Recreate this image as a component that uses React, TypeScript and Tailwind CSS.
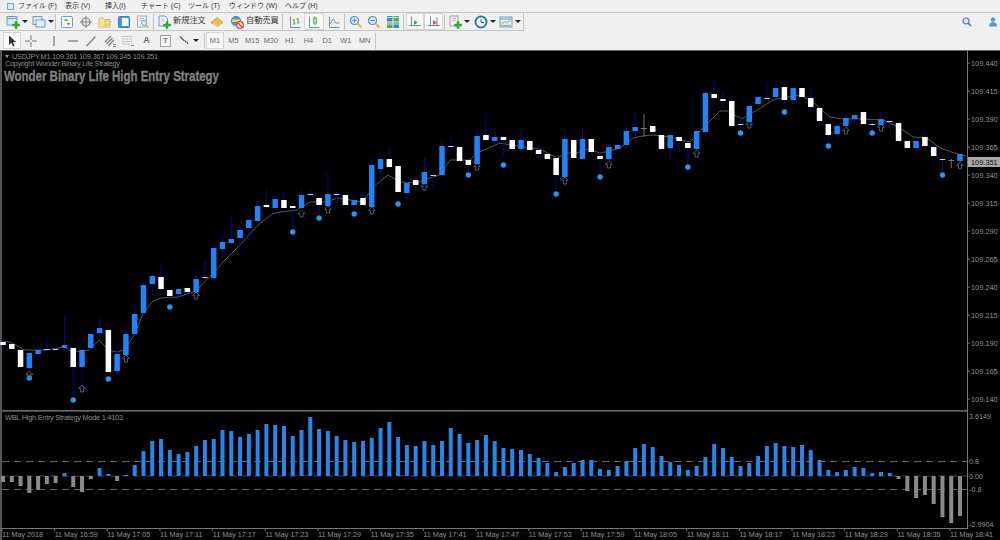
import React from "react";

type Candle = [string, number, number, number, number];

// kind, body top, body bottom, wick top, wick bottom (screen px)
const candles: Candle[] = [
  ["w", 342, 345, 340, 350], ["w", 344, 349, 341, 350], ["w", 350, 367, 349, 368], ["b", 353, 368, 350, 370],
  ["b", 350, 354, 345, 360], ["d", 349, 350, 341, 352], ["d", 349, 350, 346, 351], ["b", 345, 348, 316, 351],
  ["w", 348, 367, 347, 396], ["b", 350, 367, 349, 393], ["b", 334, 348, 332, 350], ["b", 328, 333, 318, 337],
  ["w", 330, 372, 329, 373], ["b", 354, 371, 344, 375], ["b", 334, 355, 325, 356], ["b", 314, 334, 305, 335],
  ["b", 285, 313, 283, 315], ["b", 276, 284, 274, 296], ["w", 277, 289, 263, 290], ["w", 290, 296, 289, 300],
  ["b", 289, 294, 287, 300], ["w", 288, 292, 286, 293], ["b", 279, 292, 269, 293], ["d", 277, 278, 260, 282],
  ["b", 248, 278, 243, 279], ["b", 242, 249, 236, 258], ["b", 239, 243, 215, 244], ["b", 230, 238, 226, 247],
  ["b", 220, 228, 216, 240], ["b", 206, 221, 197, 222], ["w", 205, 207, 190, 208], ["b", 199, 208, 195, 210],
  ["w", 200, 208, 193, 209], ["w", 206, 208, 205, 227], ["b", 195, 208, 190, 209], ["d", 194, 195, 190, 196],
  ["w", 198, 205, 197, 213], ["b", 194, 206, 172, 207], ["d", 194, 195, 192, 203], ["w", 195, 205, 194, 206],
  ["b", 200, 205, 198, 210], ["w", 198, 205, 192, 206], ["b", 165, 207, 158, 208], ["b", 159, 169, 157, 177],
  ["w", 159, 167, 148, 168], ["w", 166, 192, 165, 193], ["b", 183, 193, 181, 198], ["w", 180, 185, 178, 186],
  ["b", 172, 184, 158, 185], ["d", 175, 176, 173, 189], ["b", 146, 175, 142, 176], ["d", 146, 147, 137, 148],
  ["w", 147, 161, 146, 162], ["w", 160, 165, 159, 172], ["b", 136, 164, 130, 165], ["w", 135, 140, 113, 141],
  ["b", 137, 141, 132, 145], ["w", 137, 140, 136, 157], ["w", 140, 149, 139, 150], ["b", 140, 149, 130, 153],
  ["w", 141, 150, 140, 151], ["w", 150, 154, 145, 159], ["w", 154, 159, 153, 160], ["w", 158, 175, 157, 190],
  ["b", 139, 177, 127, 178], ["w", 140, 158, 139, 159], ["b", 139, 159, 130, 160], ["w", 139, 152, 138, 153],
  ["w", 156, 159, 152, 173], ["b", 147, 159, 145, 160], ["b", 145, 149, 143, 150], ["b", 131, 145, 125, 149],
  ["b", 127, 131, 112, 135], ["g", 128, 129, 114, 137], ["w", 126, 132, 123, 133], ["w", 135, 149, 134, 150],
  ["b", 135, 148, 134, 159], ["w", 137, 141, 136, 153], ["w", 143, 148, 142, 163], ["b", 131, 149, 130, 150],
  ["b", 93, 132, 92, 138], ["w", 94, 98, 80, 99], ["w", 99, 101, 92, 107], ["w", 101, 126, 100, 127],
  ["d", 124, 125, 118, 128], ["b", 106, 122, 103, 123], ["b", 97, 104, 96, 105], ["d", 98, 99, 82, 100],
  ["b", 88, 97, 85, 98], ["w", 87, 100, 86, 104], ["b", 88, 100, 87, 104], ["w", 88, 97, 87, 98],
  ["w", 98, 107, 87, 113], ["w", 108, 121, 107, 125], ["w", 124, 135, 123, 140], ["b", 126, 134, 125, 135],
  ["b", 118, 126, 113, 127], ["b", 115, 119, 114, 124], ["w", 112, 124, 111, 125], ["d", 124, 125, 123, 130],
  ["b", 119, 125, 112, 126], ["d", 121, 122, 120, 128], ["w", 123, 141, 122, 142], ["w", 141, 148, 140, 149],
  ["b", 141, 148, 140, 155], ["w", 137, 146, 130, 147], ["w", 147, 156, 146, 157], ["d", 159, 160, 158, 170],
  ["g", 160, 161, 159, 168], ["b", 154, 161, 153, 162],
];

const dots: [number, number][] = [
  [3, 378], [8, 400], [12, 379], [19, 307], [33, 232], [36, 218], [40, 214], [45, 204], [53, 175], [57, 165],
  [63, 194], [68, 177], [78, 167], [84, 133], [89, 112], [94, 146], [99, 133], [107, 175],
];

const arrows: [number, number][] = [
  [3, 371], [9, 385], [14, 355], [22, 292], [34, 210], [37, 206], [42, 207], [48, 183], [54, 163], [64, 177],
  [69, 161], [79, 150], [85, 121], [96, 127], [100, 124], [109, 162],
];

const maLine =
  "2,341 10,342 25,350 46,350 65,347 72,352 90,350 99,340 108,350 116,352 125,350 134,335 143,314 152,302 160,298 178,297 196,291 214,272 225,260 240,245 258,225 272,214 280,212 297,210 310,202 327,202 337,198 363,202 373,187 388,175 400,182 417,183 430,178 440,175 450,160 470,160 477,153 500,143 510,145 540,149 557,158 567,153 577,153 587,149 600,153 617,149 620,148 633,138 642,136 653,135 670,137 690,142 703,128 720,111 727,111 742,119 757,110 775,99 800,95 813,102 830,117 843,119 863,119 883,120 900,128 913,137 927,138 940,148 957,154 966,156";

// histogram height above (+) or below (-) the zero line
const hist = [
  -6, -6, -10, -17, -14, -8, -7, 3, -11, -16, -3, 8, 2, -5, 1, 11, 25, 35, 37, 26, 22, 24, 30, 36, 37, 46, 45, 39, 42,
  46, 52, 51, 50, 40, 46, 59, 47, 45, 40, 36, 34, 35, 38, 48, 54, 39, 31, 30, 35, 31, 35, 48, 42, 33, 36, 41, 35, 28,
  27, 26, 22, 18, 13, 4, 9, 13, 16, 16, 7, 6, 10, 15, 28, 32, 29, 20, 14, 11, 6, 10, 19, 32, 28, 19, 10, 13, 20, 30,
  33, 30, 29, 31, 26, 16, 6, 4, 6, 9, 8, 3, 4, 3, -3, -15, -22, -19, -28, -41, -47, -40,
];

const prices = [
  ["109.440", 63], ["109.415", 91], ["109.390", 119], ["109.365", 147], ["109.340", 175], ["109.315", 203],
  ["109.290", 231], ["109.265", 259], ["109.240", 287], ["109.215", 315], ["109.190", 343], ["109.165", 371],
  ["109.140", 399],
] as const;

const times = [
  "11 May 2018", "11 May 16:59", "11 May 17:05", "11 May 17:11", "11 May 17:17", "11 May 17:23", "11 May 17:29",
  "11 May 17:35", "11 May 17:41", "11 May 17:47", "11 May 17:53", "11 May 17:59", "11 May 18:05", "11 May 18:11",
  "11 May 18:17", "11 May 18:23", "11 May 18:29", "11 May 18:35", "11 May 18:41",
];

const barX = (i: number) => 3 + i * 8.78;

const Chart = () => (
  <svg viewBox="0 50 1000 490" width={1000} height={490} className="block" fontFamily="'Liberation Sans', sans-serif">
    <rect x={0} y={50} width={1000} height={490} fill="#000" />
    <rect x={0} y={50} width={2} height={490} fill="#555" />
    <rect x={0} y={49.5} width={1000} height={1.5} fill="#666" />

    {/* candles */}
    <polyline points={maLine} fill="none" stroke="#7c7c7c" strokeWidth={0.7} />
    {candles.map((c, i) => {
      const x = barX(i);
      const [kind, top, bot, wt, wb] = c;
      const gray = kind === "g";
      return (
        <g key={i}>
          <line x1={x} x2={x} y1={wt} y2={wb} stroke={gray ? "#777" : "#0a0a88"} strokeWidth={1} />
          {kind === "b" && <rect x={x - 2.75} y={top} width={5.5} height={bot - top} fill="#2083f8" />}
          {kind === "w" && <rect x={x - 2.75} y={top} width={5.5} height={bot - top} fill="#fff" />}
          {kind === "d" && <rect x={x - 2.75} y={top} width={5.5} height={1} fill="#c8c8ff" />}
          {gray && <rect x={x - 3} y={top} width={6} height={1} fill="#777" />}
        </g>
      );
    })}
    {dots.map(([i, y]) => (
      <circle key={i} cx={barX(i)} cy={y} r={2.7} fill="#2b93f0" />
    ))}
    {arrows.map(([i, y]) => {
      const x = barX(i);
      return (
        <polygon
          key={i}
          points={`${x},${y} ${x + 3.4},${y + 3.4} ${x + 1.5},${y + 3.4} ${x + 1.5},${y + 7} ${x - 1.5},${y + 7} ${x - 1.5},${y + 3.4} ${x - 3.4},${y + 3.4}`}
          fill="none"
          stroke="#5b7290"
          strokeWidth={0.8}
        />
      );
    })}

    {/* chart captions */}
    <polygon points="5,55 9,55 7,58" fill="#999" />
    <text x={12} y={59} fontSize={7.4} fill="#8c8c8c" textLength={146}>
      USDJPY,M1  109.361 109.367 109.345 109.351
    </text>
    <text x={5} y={66} fontSize={7.4} fill="#8c8c8c" textLength={115}>
      Copyright Wonder Binary Life Strategy
    </text>
    <text
      x={4}
      y={81}
      fontSize={15.5}
      fontWeight={700}
      fill="#808080"
      stroke="#808080"
      strokeWidth={0.4}
      textLength={215}
      lengthAdjust="spacingAndGlyphs"
    >
      Wonder Binary Life High Entry Strategy
    </text>

    {/* sub window */}
    <rect x={2} y={410} width={965} height={1.6} fill="#6a6a6a" />
    <text x={5} y={420} fontSize={7.4} fill="#8c8c8c" textLength={118}>
      WBL High Entry Strategy Mode 1.4103
    </text>
    <line x1={2} x2={967} y1={461.5} y2={461.5} stroke="#808080" strokeWidth={0.8} strokeDasharray="7 5" />
    <line x1={2} x2={967} y1={489.5} y2={489.5} stroke="#808080" strokeWidth={0.8} strokeDasharray="7 5" />
    <line x1={2} x2={967} y1={476} y2={476} stroke="#555" strokeWidth={0.8} strokeDasharray="7 5" />
    {hist.map((h, i) => {
      const x = barX(i) - 2;
      return h >= 0 ? (
        <rect key={i} x={x} y={476 - h} width={4} height={h} fill="#2a85ea" />
      ) : (
        <rect key={i} x={x} y={476} width={4} height={-h} fill="#8a8a8a" />
      );
    })}

    {/* axes */}
    <rect x={967} y={50} width={1} height={479} fill="#777" />
    <rect x={2} y={528} width={966} height={1} fill="#777" />
    {prices.map(([p, y]) => (
      <g key={p}>
        <line x1={967} x2={970} y1={y} y2={y} stroke="#777" />
        <text x={971} y={y + 2.8} fontSize={7.4} fill="#929292">
          {p}
        </text>
      </g>
    ))}
    <rect x={968} y={157} width={32} height={10} fill="#a8a8a8" />
    <text x={971} y={164.8} fontSize={7.4} fill="#111">
      109.351
    </text>
    {[
      ["3.6149", 416, 969],
      ["0.8", 461.5, 969],
      ["0.00", 476, 969],
      ["-0.8", 489.5, 969],
      ["-2.9904", 524, 969],
    ].map(([t, y, x]) => (
      <text key={t} x={x} y={Number(y) + 2.8} fontSize={7.2} fill="#929292">
        {t}
      </text>
    ))}
    {times.map((t, i) => {
      const x = 2 + i * 52.67;
      return (
        <g key={t}>
          <line x1={x} x2={x} y1={528} y2={531} stroke="#777" />
          <text x={x} y={537} fontSize={7.2} fill="#929292">
            {t}
          </text>
        </g>
      );
    })}
  </svg>
);

const Icon = ({ children }: { children: React.ReactNode }) => (
  <svg viewBox="0 0 14 14" width={14} height={14} className="shrink-0">
    {children}
  </svg>
);

const Plus = () => (
  <path d="M6.5 9h2.5V6.500h2V9h2.500v2H11v2.500H9V11H6.500z" fill="#2cb52c" stroke="#1a8a1a" strokeWidth={0.4} />
);

const Caret = () => <span className="ml-[2px] h-0 w-0 border-x-[3px] border-t-[3px] border-x-transparent border-t-[#222]" />;

const Sep = ({ cls }: { cls: string }) => <div className={`h-[16px] w-[1px] shrink-0 bg-[#c2c2c2] ${cls}`} />;

const Btn = ({ cls, active, children }: { cls: string; active?: boolean; children: React.ReactNode }) => (
  <div
    className={`flex h-[17px] shrink-0 items-center justify-center ${cls} ${active ? "border border-[#d6d6d6] bg-[#f9f9f9]" : ""}`}
  >
    {children}
  </div>
);

const WindowIcon = () => (
  <Icon>
    <rect x={1} y={1.5} width={10} height={8.5} fill="#dbe9f4" stroke="#6a9cc4" />
    <path d="M1 3.500h10" stroke="#6a9cc4" />
    <Plus />
  </Icon>
);

const ProfileIcon = () => (
  <Icon>
    <rect x={1} y={1.5} width={9} height={8} fill="#dbe9f4" stroke="#6a9cc4" />
    <rect x={4} y={5} width={9} height={7} fill="#e6f0f8" stroke="#6a9cc4" />
  </Icon>
);

const MarketIcon = () => (
  <Icon>
    <rect x={1.5} y={1.5} width={11} height={11} rx={1} fill="#f4f8fb" stroke="#6aa2c8" />
    <path d="M4 6l2-2.500 2 2.500z" fill="#4cb04c" />
    <path d="M6.500 8l2 2.500 2-2.500z" fill="#d06a40" />
  </Icon>
);

const CrossIcon = () => (
  <Icon>
    <circle cx={7} cy={7} r={4} fill="none" stroke="#808080" strokeWidth={1.2} />
    <path d="M7 1v12M1 7h12" stroke="#808080" />
  </Icon>
);

const FolderIcon = () => (
  <Icon>
    <path d="M1 3h4l1 1.500h6V12H1z" fill="#f8e29a" stroke="#d0ac55" strokeWidth={0.7} />
    <path d="M9.500 4l1.100 2.300 2.400.3-1.800 1.700.5 2.400-2.200-1.200-2.200 1.200.5-2.400-1.800-1.700 2.400-.3z" fill="#f8e880" stroke="#c4aa40" strokeWidth={0.6} />
  </Icon>
);

const NavIcon = () => (
  <Icon>
    <rect x={1.5} y={1.5} width={11} height={11} rx={1} fill="#4a9ad0" stroke="#3a7fae" />
    <rect x={5} y={3} width={6.5} height={8} fill="#f4f8fb" />
  </Icon>
);

const DocSearchIcon = () => (
  <Icon>
    <rect x={1.5} y={1} width={9} height={11} fill="#f2f2f2" stroke="#a0aab2" />
    <path d="M3 3.500h5M3 5.500h3" stroke="#aab" strokeWidth={0.7} />
    <circle cx={8} cy={8} r={2.5} fill="#dcecf7" stroke="#7a9ebc" />
    <path d="M10 10l2.500 2.500" stroke="#d0ac55" strokeWidth={1.4} />
  </Icon>
);

const OrderIcon = () => (
  <Icon>
    <path d="M2 1h6l2.500 2.500V11H2z" fill="#f7f7f7" stroke="#6a94b5" />
    <path d="M3.500 4h4M3.500 6h4" stroke="#a0b6c6" strokeWidth={0.7} />
    <Plus />
  </Icon>
);

const BookIcon = () => (
  <Icon>
    <path d="M1 8l6-5.500 6 5-5.500 4z" fill="#e8c050" stroke="#a8842a" strokeWidth={0.7} />
    <path d="M2.500 8.500l5 3 4-3" fill="none" stroke="#fff1b8" strokeWidth={0.7} />
  </Icon>
);

const AutoIcon = () => (
  <Icon>
    <circle cx={6} cy={6} r={4.7} fill="#4a98c8" stroke="#30709c" strokeWidth={0.6} />
    <path d="M2 4.500h8v2.500H2z" fill="#f2d464" />
    <circle cx={10} cy={10} r={3.3} fill="#fff" stroke="#d83a2f" strokeWidth={1.3} />
    <path d="M8 8l4 4" stroke="#d83a2f" strokeWidth={1.2} />
  </Icon>
);

const ChartTypeIcon = ({ kind }: { kind: number }) => (
  <Icon>
    <path d="M2.500 1.500v11h10" fill="none" stroke="#6a8ea2" />
    {kind === 0 && <path d="M6 4v6M6 5H4.500M6 8h1.500M10 3v6M10 4H8.500M10 7h1.500" stroke="#3aa844" fill="none" />}
    {kind === 1 && (
      <g>
        <path d="M8 1.500v9" stroke="#3aa844" />
        <rect x={6.5} y={3} width={3} height={5} fill="#b8e8b8" stroke="#3aa844" strokeWidth={0.8} />
      </g>
    )}
    {kind === 2 && <path d="M3 9l3-5 3 4h3.500" fill="none" stroke="#7a967a" />}
  </Icon>
);

const ZoomIcon = ({ plus }: { plus: boolean }) => (
  <Icon>
    <circle cx={5.5} cy={5.5} r={4} fill="#dcecf8" stroke="#4a90c0" strokeWidth={1.2} />
    <path d={plus ? "M3.500 5.500h4M5.500 3.500v4" : "M3.500 5.500h4"} stroke="#4a90c0" strokeWidth={1.2} />
    <path d="M8.500 8.500l4 4" stroke="#e0b84a" strokeWidth={2} />
  </Icon>
);

const TileIcon = () => (
  <Icon>
    <rect x={1} y={1} width={5.5} height={5.5} fill="#3f8abc" />
    <rect x={7.5} y={1} width={5.5} height={5.5} fill="#55a864" />
    <rect x={1} y={7.5} width={5.5} height={5.5} fill="#55a864" />
    <rect x={7.5} y={7.5} width={5.5} height={5.5} fill="#3f8abc" />
    <path d="M1 2.500h5.500M7.500 2.500H13M1 9h5.500M7.500 9H13" stroke="#dff" strokeWidth={0.8} />
  </Icon>
);

const ShiftIcon = ({ kind }: { kind: number }) => (
  <Icon>
    <path d="M3.500 1.500v10M1 10.500h12" fill="none" stroke="#6a8ea2" />
    {kind === 1 && <path d="M10 2v9" stroke="#6a8ea2" />}
    {kind === 0 ? <path d="M6 5l3.500 2.500L6 10z" fill="#3aa844" /> : <path d="M6 5l4 2.500-4 2.500z" fill="#d05a40" />}
  </Icon>
);

const TemplateIcon = () => (
  <Icon>
    <rect x={2} y={1} width={8} height={10} fill="#f4f4f4" stroke="#a0a0a0" />
    <path d="M4 3.500h4M4 5.500h4" stroke="#aaa" strokeWidth={0.7} />
    <Plus />
  </Icon>
);

const ClockIcon = () => (
  <Icon>
    <circle cx={7} cy={7} r={5.5} fill="#fff" stroke="#2a78b8" strokeWidth={2} />
    <path d="M7 4v3.500h3" fill="none" stroke="#2a5a88" />
  </Icon>
);

const ChartWinIcon = () => (
  <Icon>
    <rect x={1} y={2} width={12} height={10} fill="#dfecf6" stroke="#6a9cc4" />
    <path d="M1 4h12" stroke="#6a9cc4" />
    <path d="M2.500 9l3-2.500 2 1.500 4-3" fill="none" stroke="#c89a68" />
    <path d="M2.500 10.500h9" stroke="#8ab48a" />
  </Icon>
);

const timeframes = ["M5", "M15", "M30", "H1", "H4", "D1", "W1", "MN"];

const menus = [
  { label: "ファイル (F)", cls: "w-[47px]" },
  { label: "表示 (V)", cls: "w-[40px]" },
  { label: "挿入(I)", cls: "w-[36px]" },
  { label: "チャート (C)", cls: "w-[47px]" },
  { label: "ツール (T)", cls: "w-[41px]" },
  { label: "ウィンドウ (W)", cls: "w-[56px]" },
  { label: "ヘルプ (H)", cls: "w-[40px]" },
];

export default function App() {
  return (
    <div className="flex h-[540px] w-[1000px] flex-col overflow-hidden bg-[#f0f0f0] font-['Liberation_Sans','Noto_Sans_CJK_JP',sans-serif] text-[#333]">
      {/* menu bar, cut off at the top of the shot */}
      <div className="flex h-[12px] items-center overflow-hidden pl-[7px] text-[7px]">
        <div className="mr-[4px] h-[7px] w-[7px] border border-[#7aa4c4] bg-[#dbe9f4]" />
        {menus.map((m) => (
          <span key={m.label} className={`whitespace-nowrap leading-[10px] ${m.cls}`}>
            {m.label}
          </span>
        ))}
      </div>

      {/* top toolbar */}
      <div className="flex h-[19px] items-center border-t border-[#c4c4c4]">
        <div className="flex h-[18px] w-[524px] items-center border-r border-b border-[#c4c4c4] pl-[6px]">
          <Btn cls="w-[22px]">
            <WindowIcon />
            <Caret />
          </Btn>
          <Btn cls="ml-[3px] w-[23px]">
            <ProfileIcon />
            <Caret />
          </Btn>
          <Sep cls="ml-[1px] mr-[1px]" />
          <Btn cls="w-[19px]">
            <MarketIcon />
          </Btn>
          <Btn cls="w-[19px]">
            <CrossIcon />
          </Btn>
          <Btn cls="w-[19px]">
            <FolderIcon />
          </Btn>
          <Btn cls="w-[19px]">
            <NavIcon />
          </Btn>
          <Btn cls="w-[19px]">
            <DocSearchIcon />
          </Btn>
          <Sep cls="mx-[1px]" />
          <Btn cls="w-[52px] gap-[2px] text-[8.2px] justify-start pl-[2px]">
            <OrderIcon />
            <span>新規注文</span>
          </Btn>
          <Btn cls="w-[19px]">
            <BookIcon />
          </Btn>
          <Btn cls="w-[55px] gap-[2px] text-[8.2px] justify-start pl-[4px]">
            <AutoIcon />
            <span>自動売買</span>
          </Btn>
          <Sep cls="ml-[1px] mr-[2px]" />
          <Btn cls="w-[19px]">
            <ChartTypeIcon kind={0} />
          </Btn>
          <Btn cls="w-[20px]" active>
            <ChartTypeIcon kind={1} />
          </Btn>
          <Btn cls="w-[20px]">
            <ChartTypeIcon kind={2} />
          </Btn>
          <Sep cls="mr-[2px]" />
          <Btn cls="w-[18px]">
            <ZoomIcon plus />
          </Btn>
          <Btn cls="w-[18px]">
            <ZoomIcon plus={false} />
          </Btn>
          <Btn cls="w-[19px]">
            <TileIcon />
          </Btn>
          <Sep cls="ml-[1px] mr-[2px]" />
          <Btn cls="w-[18px]" active>
            <ShiftIcon kind={0} />
          </Btn>
          <Btn cls="w-[19px]" active>
            <ShiftIcon kind={1} />
          </Btn>
          <Sep cls="ml-[1px] mr-[2px]" />
          <Btn cls="w-[26px] justify-start pl-[1px]">
            <TemplateIcon />
            <Caret />
          </Btn>
          <Btn cls="w-[26px] justify-start pl-[1px]">
            <ClockIcon />
            <Caret />
          </Btn>
          <Btn cls="w-[22px] justify-start">
            <ChartWinIcon />
            <Caret />
          </Btn>
        </div>
        <div className="ml-auto flex items-center gap-[12px]">
          <Icon>
            <circle cx={6} cy={6} r={3} fill="#e6f0f8" stroke="#4a80a8" strokeWidth={1.2} />
            <path d="M8.200 8.200l2.800 2.800" stroke="#4a80a8" strokeWidth={1.5} />
          </Icon>
          <Icon>
            <circle cx={7} cy={4.5} r={2.2} fill="#5a98cc" />
            <path d="M3 11.500c0-3 1.800-4.500 4-4.500s4 1.500 4 4.500z" fill="#5a98cc" />
          </Icon>
        </div>
      </div>

      {/* drawing and timeframe toolbar */}
      <div className="flex h-[19px] items-center pl-[3px]">
        <Btn cls="w-[18px]" active>
          <Icon>
            <path d="M4 1.500v9.500l2.400-2.200 1.700 3.700 1.500-.7-1.700-3.600 3.100-.2z" fill="#333" />
          </Icon>
        </Btn>
        <Btn cls="w-[19px]">
          <Icon>
            <path d="M7 1v5M7 8v5M1 7h5M8 7h5" stroke="#777" />
          </Icon>
        </Btn>
        <div className="w-[5px] shrink-0" />
        <Btn cls="w-[18px]">
          <Icon>
            <path d="M7 2v10" stroke="#666" strokeWidth={1.1} />
          </Icon>
        </Btn>
        <Btn cls="w-[19px]">
          <Icon>
            <path d="M2 7h10" stroke="#666" strokeWidth={1.1} />
          </Icon>
        </Btn>
        <Btn cls="w-[18px]">
          <Icon>
            <path d="M2.500 12L11.500 2.500" stroke="#777" strokeWidth={1.1} />
          </Icon>
        </Btn>
        <Btn cls="w-[19px]">
          <Icon>
            <path d="M2 8l6-6M3.500 10l6-6M5 12l6-6" stroke="#777" strokeWidth={1.1} />
            <path d="M10 10.500h3M10 12.500h3" stroke="#555" strokeWidth={0.7} />
          </Icon>
        </Btn>
        <Btn cls="w-[18px]">
          <Icon>
            <path d="M1 2.500h11M1 5h11M1 7.500h11M1 10h8" stroke="#999" strokeWidth={0.7} strokeDasharray="1.500 0.700" />
            <path d="M10 11.500h3" stroke="#555" strokeWidth={0.7} />
          </Icon>
        </Btn>
        <Btn cls="w-[19px] text-[9px] font-bold text-[#666]">A</Btn>
        <Btn cls="w-[19px]">
          <div className="flex h-[12px] w-[11px] items-center justify-center border border-[#a0a0a0] bg-[#f8f8f8] text-[8px] font-bold leading-none text-[#777]">
            T
          </div>
        </Btn>
        <Btn cls="w-[25px] justify-start pl-[2px]">
          <Icon>
            <path d="M3 2.500l4.500 4.500" stroke="#666" strokeWidth={1.5} />
            <path d="M8 7l4 3" stroke="#444" strokeWidth={1.5} strokeDasharray="1.500 1" />
          </Icon>
          <Caret />
        </Btn>
        <Sep cls="ml-[4px] mr-[1px]" />
        <div className="flex h-[17px] items-center text-[7.4px] text-[#666]">
          <div className="flex h-[17px] w-[18px] items-center justify-center border border-[#d6d6d6] bg-[#f9f9f9]">M1</div>
          {timeframes.map((t) => (
            <div key={t} className="flex w-[18.75px] items-center justify-center">
              {t}
            </div>
          ))}
        </div>
        <Sep cls="ml-[1px]" />
      </div>

      <Chart />
    </div>
  );
}
